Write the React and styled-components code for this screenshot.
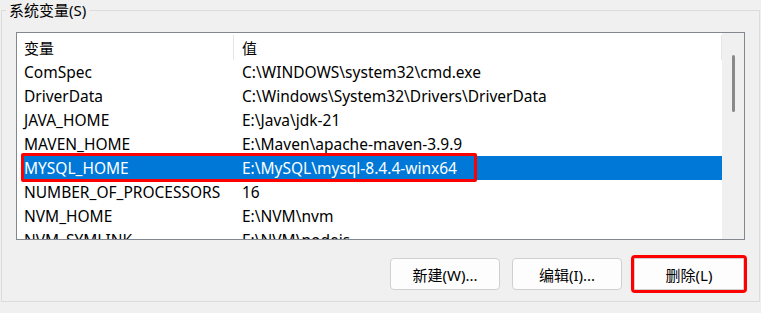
import React from 'react';
import styled, { createGlobalStyle } from 'styled-components';

const GlobalStyle = createGlobalStyle`
  html, body {
    margin: 0;
    padding: 0;
    background: #f0f0f0;
  }
  body {
    font-family: "Noto Sans", "Noto Sans CJK SC", sans-serif;
    font-size: 15px;
    color: #000;
  }
`;

const Page = styled.div`
  width: 761px;
  height: 313px;
  padding: 0 0 0 1px;
  box-sizing: border-box;
  overflow: hidden;
`;

const Group = styled.fieldset`
  margin: 0;
  padding: 0;
  width: 759px;
  height: 302px;
  box-sizing: border-box;
  border: 1px solid #dcdcdc;
  min-width: 0;
`;

const Legend = styled.legend`
  margin-left: 4px;
  padding: 0 3px;
  line-height: 20px;
  font-size: 15px;
`;

const ListBox = styled.div`
  margin: 12px 0 0 14px;
  width: 729px;
  height: 208px;
  box-sizing: border-box;
  border: 1px solid #828790;
  background: #fff;
  display: flex;
  overflow: hidden;
`;

const Rows = styled.div`
  flex: 1;
  min-width: 0;
  overflow: hidden;
  font-size: 15.5px;
`;

const Row = styled.div`
  position: relative;
  display: flex;
  height: ${(p) => (p.$header ? 27 : 24)}px;
  align-items: center;
  white-space: nowrap;
  color: ${(p) => (p.$selected ? '#fff' : '#000')};
  background: ${(p) =>
    p.$selected ? 'linear-gradient(to right, transparent 4px, #0078d7 4px)' : 'transparent'};

  ${(p) =>
    p.$marked &&
    `
    &::after {
      content: '';
      position: absolute;
      left: 4px;
      top: -3px;
      width: 456px;
      height: 29px;
      box-sizing: border-box;
      border: 3px solid #ff0000;
      border-radius: 2px;
    }
  `}
`;

const Cell = styled.div`
  box-sizing: border-box;
  height: 100%;
  display: flex;
  align-items: center;
  padding-left: ${(p) => (p.$first ? 7 : 8)}px;
  width: ${(p) => (p.$first ? '217px' : 'auto')};
  flex: ${(p) => (p.$first ? 'none' : 1)};
  border-right: ${(p) => (p.$header ? '1px solid #e5e5e5' : 'none')};
`;

const HeaderCell = styled(Cell)`
  height: 25px;
  margin-top: 1px;
  font-size: 15px;
`;

const Scrollbar = styled.div`
  width: 22px;
  flex: none;
  background: #f0f0f0;
  padding-top: 22px;
  box-sizing: border-box;
  display: flex;
  justify-content: center;
`;

const Thumb = styled.div`
  width: 3px;
  height: 57px;
  margin-left: 1px;
  border-radius: 2px;
  background: #8a8a8a;
`;

const ButtonRow = styled.div`
  display: flex;
  justify-content: flex-end;
  gap: 12px;
  margin: 18px 15px 0 0;
`;

const Button = styled.button`
  width: 110px;
  height: 32px;
  box-sizing: border-box;
  border: 1px solid #d0d0d0;
  border-radius: ${(p) => (p.$marked ? 1 : 4)}px;
  background: #fdfdfd;
  font-family: "Noto Sans", "Noto Sans CJK SC", sans-serif;
  font-size: 15px;
  color: #000;
  padding: 0;
  outline: ${(p) => (p.$marked ? '3px solid #ff0000' : 'none')};
  outline-offset: 0;
`;

const vars = [
  ['ComSpec', 'C:\\WINDOWS\\system32\\cmd.exe'],
  ['DriverData', 'C:\\Windows\\System32\\Drivers\\DriverData'],
  ['JAVA_HOME', 'E:\\Java\\jdk-21'],
  ['MAVEN_HOME', 'E:\\Maven\\apache-maven-3.9.9'],
  ['MYSQL_HOME', 'E:\\MySQL\\mysql-8.4.4-winx64'],
  ['NUMBER_OF_PROCESSORS', '16'],
  ['NVM_HOME', 'E:\\NVM\\nvm'],
  ['NVM_SYMLINK', 'E:\\NVM\\nodejs'],
];

export default function App() {
  return (
    <Page>
      <GlobalStyle />
      <Group>
        <Legend>系统变量(S)</Legend>
        <ListBox>
          <Rows>
            <Row $header>
              <HeaderCell $first $header>变量</HeaderCell>
              <HeaderCell $header>值</HeaderCell>
            </Row>
            {vars.map(([name, value]) => {
              const sel = name === 'MYSQL_HOME';
              return (
                <Row key={name} $selected={sel} $marked={sel}>
                  <Cell $first>{name}</Cell>
                  <Cell>{value}</Cell>
                </Row>
              );
            })}
          </Rows>
          <Scrollbar>
            <Thumb />
          </Scrollbar>
        </ListBox>
        <ButtonRow>
          <Button>新建(W)...</Button>
          <Button>编辑(I)...</Button>
          <Button $marked>删除(L)</Button>
        </ButtonRow>
      </Group>
    </Page>
  );
}
